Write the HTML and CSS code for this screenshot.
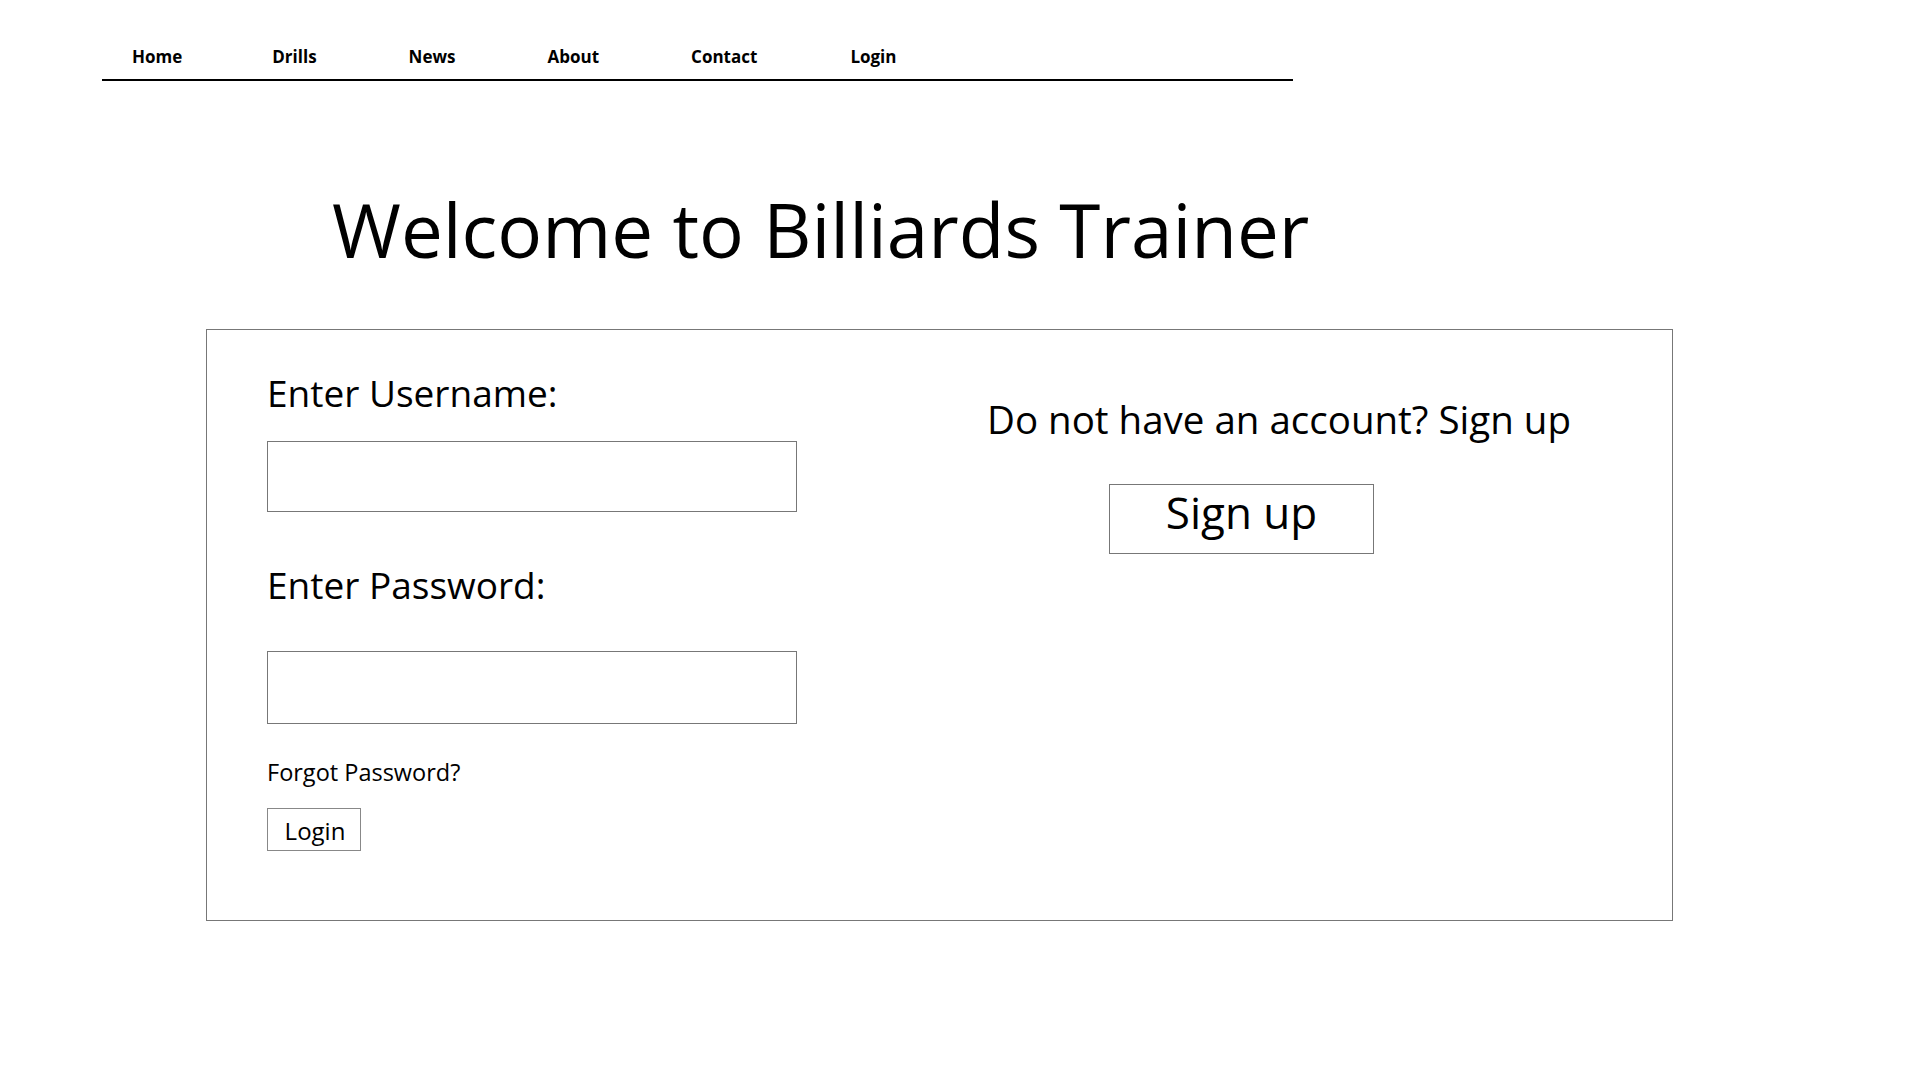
FILE: index.html
```html
<!DOCTYPE html>
<html lang="en">
<head>
<meta charset="utf-8">
<title>Billiards Trainer - Login</title>
<link rel="stylesheet" href="styles.css">
</head>
<body>
<header class="topbar">
  <nav class="nav">
    <a class="nav-link" href="#">Home</a>
    <a class="nav-link" href="#">Drills</a>
    <a class="nav-link" href="#">News</a>
    <a class="nav-link" href="#">About</a>
    <a class="nav-link" href="#">Contact</a>
    <a class="nav-link" href="#">Login</a>
  </nav>
</header>
<h1 class="title">Welcome to Billiards Trainer</h1>
<main class="panel">
  <form class="login-col">
    <label class="field-label" for="user">Enter Username:</label>
    <input class="field user" id="user" type="text">
    <label class="field-label pw-label" for="pw">Enter Password:</label>
    <input class="field pw" id="pw" type="password">
    <a class="forgot" href="#">Forgot Password?</a>
    <button class="login-btn" type="button">Login</button>
  </form>
  <section class="signup-col">
    <p class="signup-text">Do not have an account? Sign up</p>
    <button class="signup-btn" type="button">Sign up</button>
  </section>
</main>
</body>
</html>
```
FILE: styles.css
```css
* { box-sizing: border-box; }
html, body { margin: 0; padding: 0; background: #fff; }
body {
  font-family: "Open Sans", "Noto Sans", sans-serif;
  color: #000;
}
.topbar {
  width: 1191px;
  margin-left: 102px;
  padding: 45px 0 10px 30px;
  border-bottom: 2px solid #000;
}
.nav {
  display: flex;
  gap: 92px;
  height: 24px;
  align-items: center;
}
.nav-link {
  font-size: 17px;
  font-weight: 700;
  color: #000;
  text-decoration: none;
  line-height: 24px;
}
.nav-link:first-child { margin-right: -2px; }
.nav-link:last-child { margin-left: 1px; }
.title {
  margin: 98px 0 0 332px;
  font-size: 74.6px;
  font-weight: 400;
  line-height: 100px;
  letter-spacing: 0;
}
.panel {
  margin: 50px 0 0 206px;
  width: 1467px;
  height: 592px;
  border: 1px solid #777;
  display: flex;
}
.login-col {
  display: flex;
  flex-direction: column;
  align-items: flex-start;
  padding: 38px 0 0 60px;
  width: 590px;
}
.field-label {
  font-size: 37px;
  line-height: 50px;
}
.field {
  width: 530px;
  height: 71px;
  border: 1px solid #777;
  margin-top: 23px;
  font: inherit;
}
.pw-label { margin-top: 48px; }
.field.pw { margin-top: 41px; height: 73px; }
.forgot {
  margin-top: 33px;
  font-size: 23.5px;
  line-height: 30px;
  color: #000;
  text-decoration: none;
}
.login-btn {
  margin-top: 21px;
  width: 94px;
  height: 43px;
  border: 1px solid #888;
  background: #fff;
  font-family: inherit;
  font-size: 24px;
  line-height: 1;
  padding: 2px 0 0 2px;
  color: #000;
}
.signup-col {
  margin-left: 190px;
  padding-top: 64px;
  display: flex;
  flex-direction: column;
  align-items: flex-start;
}
.signup-text {
  margin: 0;
  font-size: 38.5px;
  line-height: 50px;
}
.signup-btn {
  margin: 40px 0 0 122px;
  width: 265px;
  height: 70px;
  border: 1px solid #777;
  background: #fff;
  font-family: inherit;
  font-size: 44px;
  line-height: 1;
  padding: 0 0 14px 0;
  color: #000;
}
```
